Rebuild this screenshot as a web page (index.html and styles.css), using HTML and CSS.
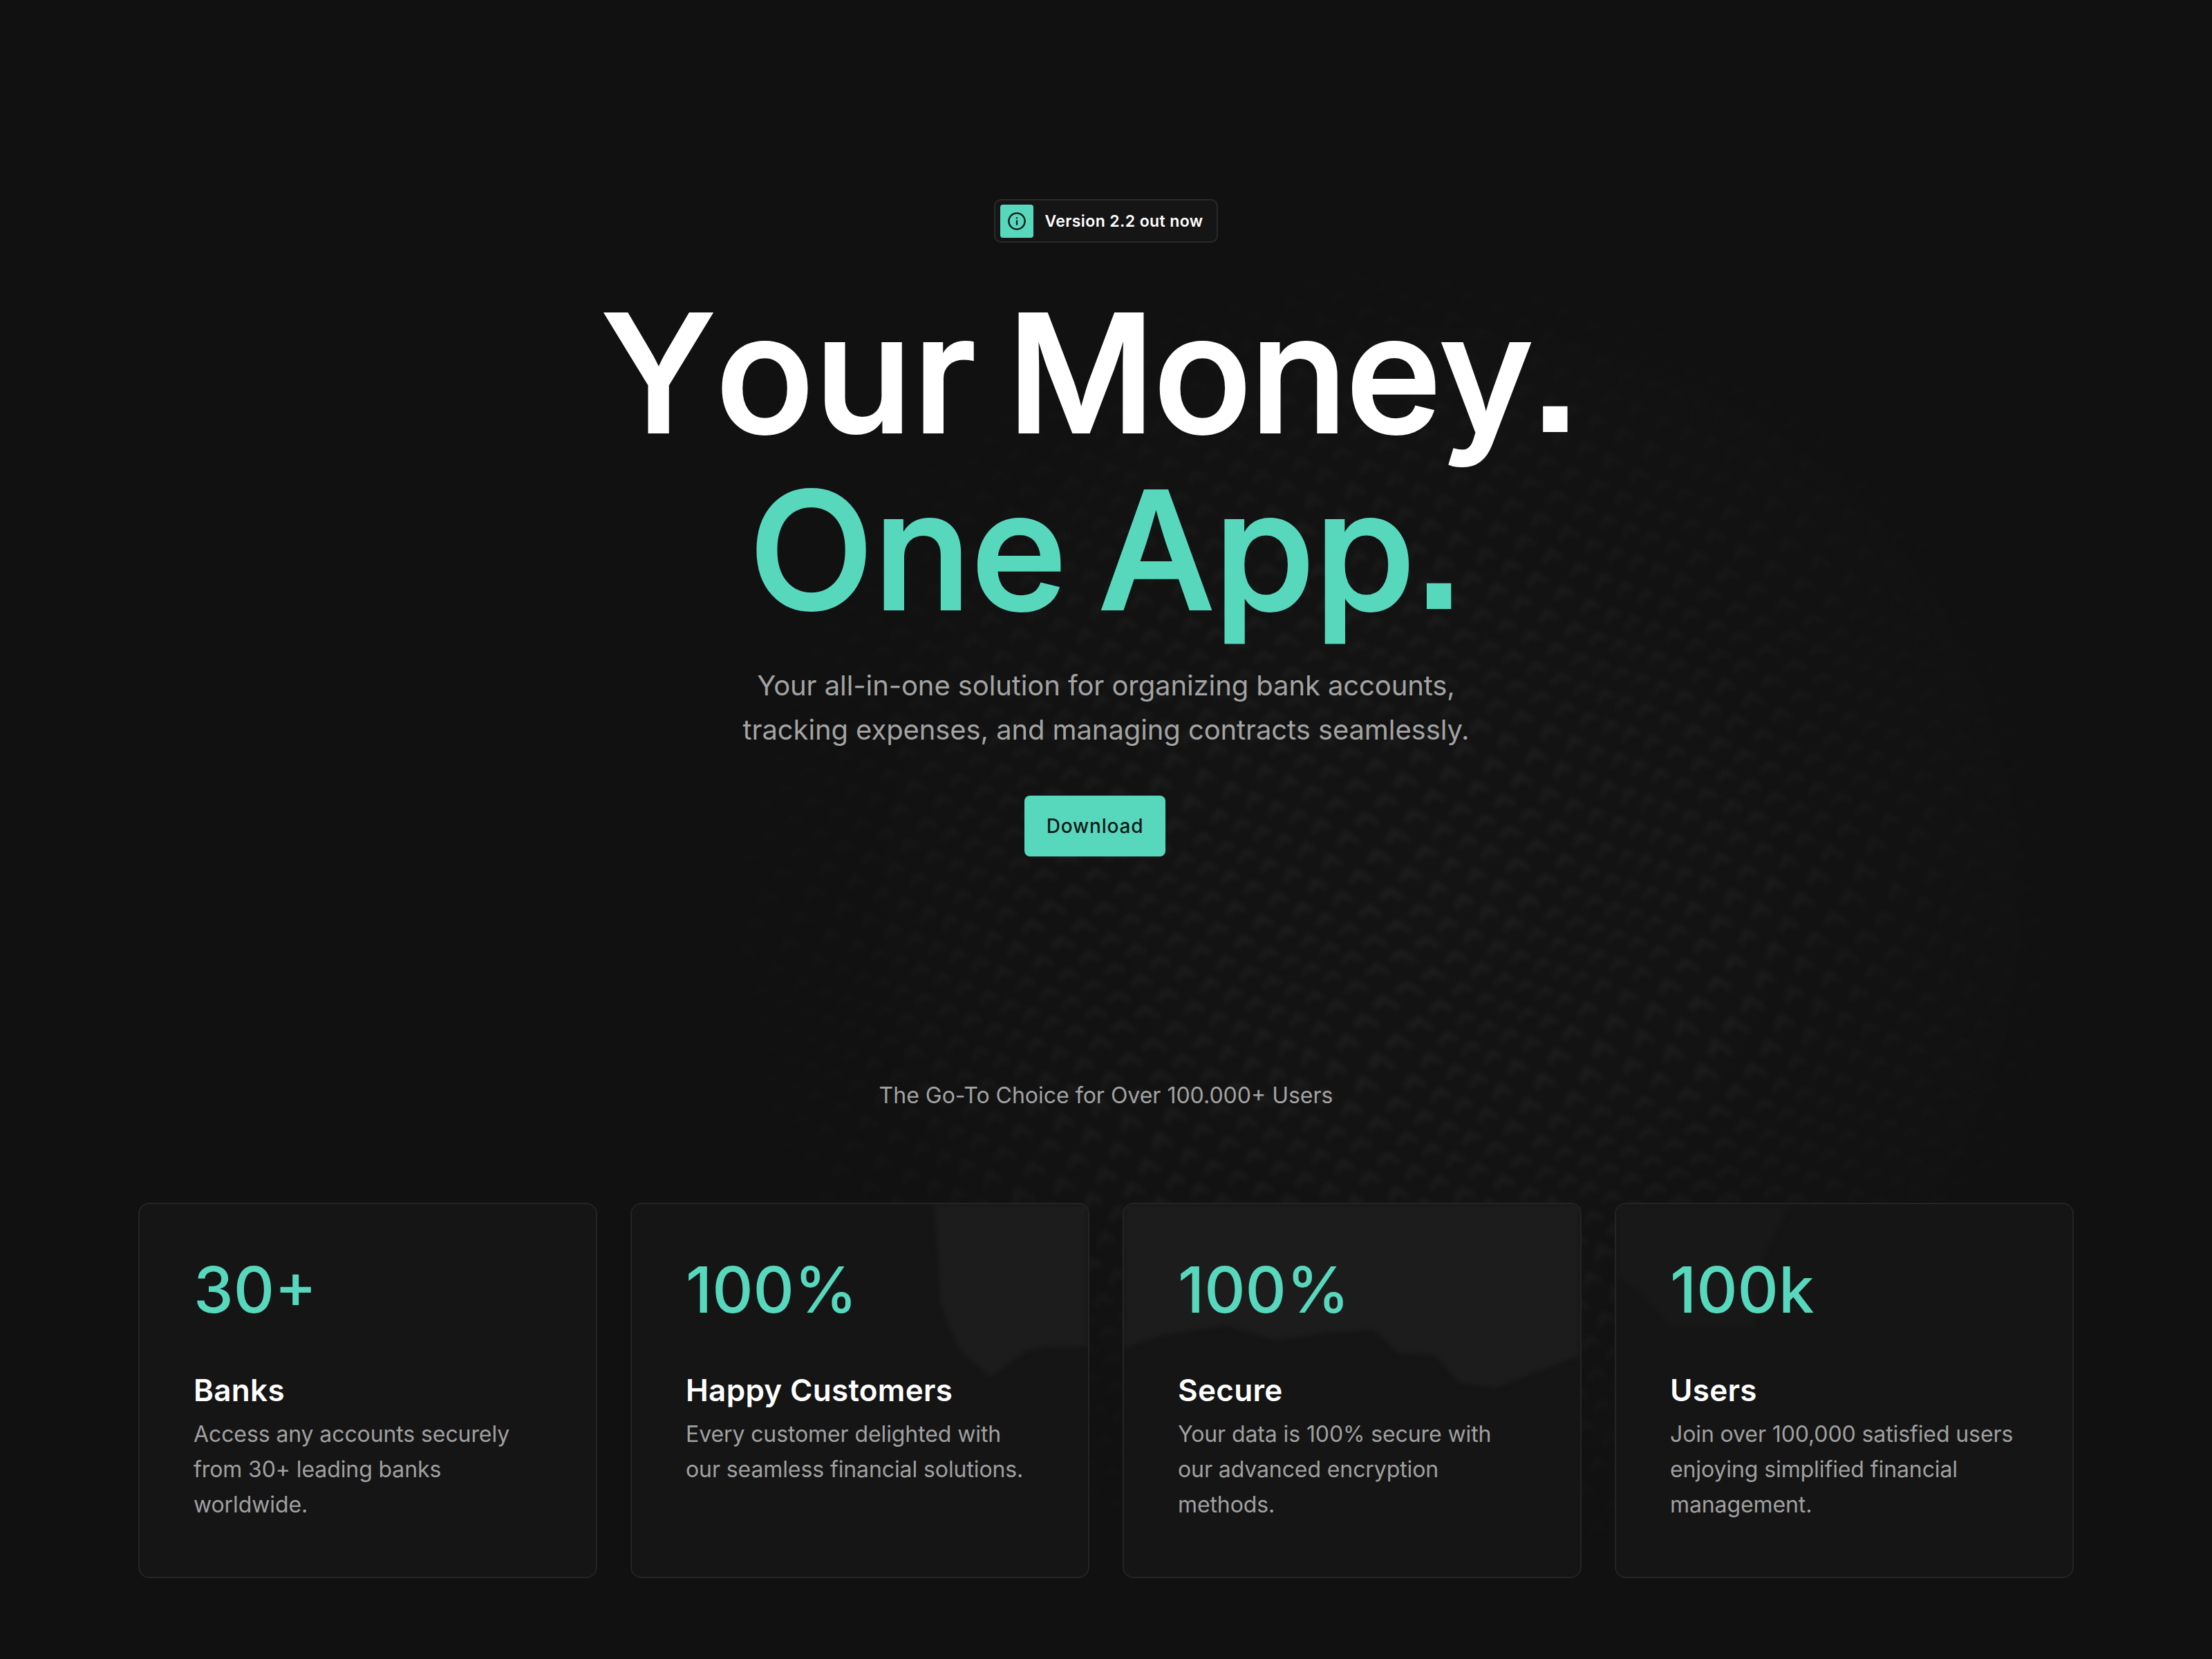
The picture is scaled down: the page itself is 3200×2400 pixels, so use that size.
FILE: index.html
```html
<!DOCTYPE html>
<html lang="en">
<head>
<meta charset="utf-8">
<title>Your Money. One App.</title>
<link rel="stylesheet" href="styles.css">
</head>
<body>
<svg class="texture" viewBox="0 0 3200 2400" aria-hidden="true">
  <defs>
    <pattern id="knit" width="62" height="50" patternUnits="userSpaceOnUse" patternTransform="rotate(-14 2100 1250)">
      <path d="M4 20 L16 8 L28 20 M35 45 L47 33 L59 45" fill="none" stroke="#fff" stroke-width="8" stroke-linecap="round"/>
    </pattern>
    <filter id="warp" x="0" y="0" width="100%" height="100%">
      <feTurbulence type="fractalNoise" baseFrequency="0.003" numOctaves="2" seed="7"/>
      <feDisplacementMap in="SourceGraphic" scale="90"/>
      <feGaussianBlur stdDeviation="5"/>
    </filter>
    <radialGradient id="fade" gradientUnits="userSpaceOnUse" cx="2020" cy="1340" r="1080">
      <stop offset="0" stop-color="#fff" stop-opacity="0.05"/>
      <stop offset="0.5" stop-color="#fff" stop-opacity="0.042"/>
      <stop offset="0.8" stop-color="#fff" stop-opacity="0.016"/>
      <stop offset="1" stop-color="#fff" stop-opacity="0"/>
    </radialGradient>
    <mask id="fade-mask"><rect width="3200" height="2400" fill="url(#fade)"/></mask>
    <radialGradient id="glow" gradientUnits="userSpaceOnUse" cx="2100" cy="1300" r="1000">
      <stop offset="0" stop-color="#fff" stop-opacity="0.012"/>
      <stop offset="1" stop-color="#fff" stop-opacity="0"/>
    </radialGradient>
  </defs>
  <rect width="3200" height="2400" fill="url(#glow)"/>
  <g mask="url(#fade-mask)">
    <rect width="3200" height="2400" fill="url(#knit)" filter="url(#warp)"/>
  </g>
</svg>

<main class="page">
  <section class="hero">
    <div class="badge">
      <span class="badge-icon">
        <svg viewBox="0 0 24 24" width="28" height="28" fill="none" stroke="#0f1a18" stroke-width="2" stroke-linecap="round">
          <circle cx="12" cy="12" r="10"/>
          <path d="M12 16v-4.5"/>
          <path d="M12 8h.01"/>
        </svg>
      </span>
      <span class="badge-text">Version 2.2 out now</span>
    </div>
    <h1 class="headline">
      <span class="headline-line first"><span class="wide">Your</span> Money<span class="stop">.</span></span>
      <span class="headline-line accent">One App<span class="stop">.</span></span>
    </h1>
    <p class="lead">Your all-in-one solution for organizing bank accounts,<br>tracking expenses, and managing contracts seamlessly.</p>
    <div class="actions">
      <a class="download" href="#">Download</a>
    </div>
    <p class="tagline">The Go-To Choice for Over 100.000+ Users</p>
  </section>

  <section class="stats">
    <article class="card">
      <div class="stat-value">30+</div>
      <h2 class="stat-title">Banks</h2>
      <p class="stat-text">Access any accounts securely from 30+ leading banks worldwide.</p>
    </article>
    <article class="card">
      <svg class="map" viewBox="0 0 664 543" preserveAspectRatio="none" aria-hidden="true"><path d="M440 0 L664 0 L664 207 L602 208 L575 213 L522 252 L477 213 L450 147 Z"/></svg>
      <div class="stat-value">100%</div>
      <h2 class="stat-title">Happy Customers</h2>
      <p class="stat-text">Every customer delighted with our seamless financial solutions.</p>
    </article>
    <article class="card">
      <svg class="map" viewBox="0 0 664 543" preserveAspectRatio="none" aria-hidden="true"><path d="M0 0 L664 0 L664 220 L605 243 L542 267 L488 260 L453 220 L399 217 L363 183 L292 188 L221 198 L149 177 L60 190 L0 210 Z"/></svg>
      <div class="stat-value">100%</div>
      <h2 class="stat-title">Secure</h2>
      <p class="stat-text">Your data is 100% secure with our advanced encryption methods.</p>
    </article>
    <article class="card">
      <svg class="map map-dim" viewBox="0 0 664 543" preserveAspectRatio="none" aria-hidden="true"><path d="M0 0 L254 0 L214 80 L201 180 L80 180 L35 130 L4 107 L0 100 Z"/></svg>
      <div class="stat-value">100k</div>
      <h2 class="stat-title">Users</h2>
      <p class="stat-text">Join over 100,000 satisfied users enjoying simplified financial management.</p>
    </article>
  </section>
</main>
</body>
</html>
```

FILE: styles.css
```css
* { box-sizing: border-box; }

html, body {
  margin: 0;
  background: #111111;
}

body {
  position: relative;
  width: 3200px;
  height: 2400px;
  overflow: hidden;
  color: #fff;
  font-family: "Inter", "Liberation Sans", sans-serif;
}

.texture {
  position: absolute;
  inset: 0;
  width: 3200px;
  height: 2400px;
}

.page {
  position: relative;
  padding: 288px 200px 0;
}

.hero {
  display: flex;
  flex-direction: column;
  align-items: center;
  text-align: center;
}

.badge {
  display: flex;
  align-items: center;
  gap: 16px;
  height: 63px;
  padding: 0 19px 0 7px;
  background: #151515;
  border: 2px solid #2a2a2a;
  border-radius: 10px;
}

.badge-icon {
  display: flex;
  align-items: center;
  justify-content: center;
  width: 48px;
  height: 48px;
  background: #57d8bd;
  border-radius: 4px;
}

.badge-text {
  font-size: 23px;
  font-weight: 600;
  letter-spacing: 0.4px;
}

.headline {
  margin: 61px 0 0;
  font-size: 235px;
  font-weight: 500;
  font-optical-sizing: none;
  font-kerning: none;
  line-height: 256px;
  letter-spacing: -2.5px;
  word-spacing: -16px;
  -webkit-text-stroke: 4px currentColor;
}

.headline-line {
  display: block;
}

.first {
  margin-right: 47px;
}

.wide {
  letter-spacing: 1px;
}

.stop {
  font-family: "Liberation Sans", sans-serif;
  font-size: 250px;
  font-weight: 700;
  line-height: 0;
  -webkit-text-stroke: 0;
}

.accent {
  letter-spacing: 0;
  color: #57d8bd;
}

.lead {
  margin: 36px 0 0;
  font-size: 40px;
  line-height: 64px;
  letter-spacing: -0.1px;
  color: #a3a3a3;
}

.actions {
  display: flex;
  justify-content: center;
  margin-top: 63px;
  padding-right: 32px;
}

.download {
  display: flex;
  align-items: center;
  justify-content: center;
  width: 204px;
  height: 88px;
  font-size: 28px;
  font-weight: 500;
  letter-spacing: 0.8px;
  color: #0f1a18;
  text-decoration: none;
  background: #57d8bd;
  border-radius: 8px;
}

.tagline {
  margin: 320px 0 0;
  font-size: 32px;
  line-height: 51px;
  color: #a3a3a3;
}

.stats {
  display: grid;
  grid-template-columns: repeat(4, 1fr);
  gap: 48px;
  margin-top: 130px;
}

.card {
  position: relative;
  height: 543px;
  padding: 69px 80px 0 78px;
  overflow: hidden;
  background: #151515;
  border: 2px solid #242424;
  border-radius: 16px;
}

.map {
  position: absolute;
  inset: 0;
  width: 100%;
  height: 100%;
  fill: #1c1c1c;
  filter: blur(3px);
}

.map-dim {
  fill: #181818;
}

.stat-value,
.stat-title,
.stat-text {
  position: relative;
}

.stat-value {
  font-size: 92px;
  font-weight: 500;
  font-optical-sizing: none;
  line-height: 110px;
  color: #57d8bd;
}

.stat-title {
  margin: 62px 0 0;
  font-size: 44px;
  font-weight: 600;
  line-height: 56px;
  letter-spacing: 0.3px;
}

.stat-text {
  margin: 10px 0 0;
  font-size: 32px;
  line-height: 51.2px;
  letter-spacing: -0.1px;
  color: #a0a0a0;
}
```
